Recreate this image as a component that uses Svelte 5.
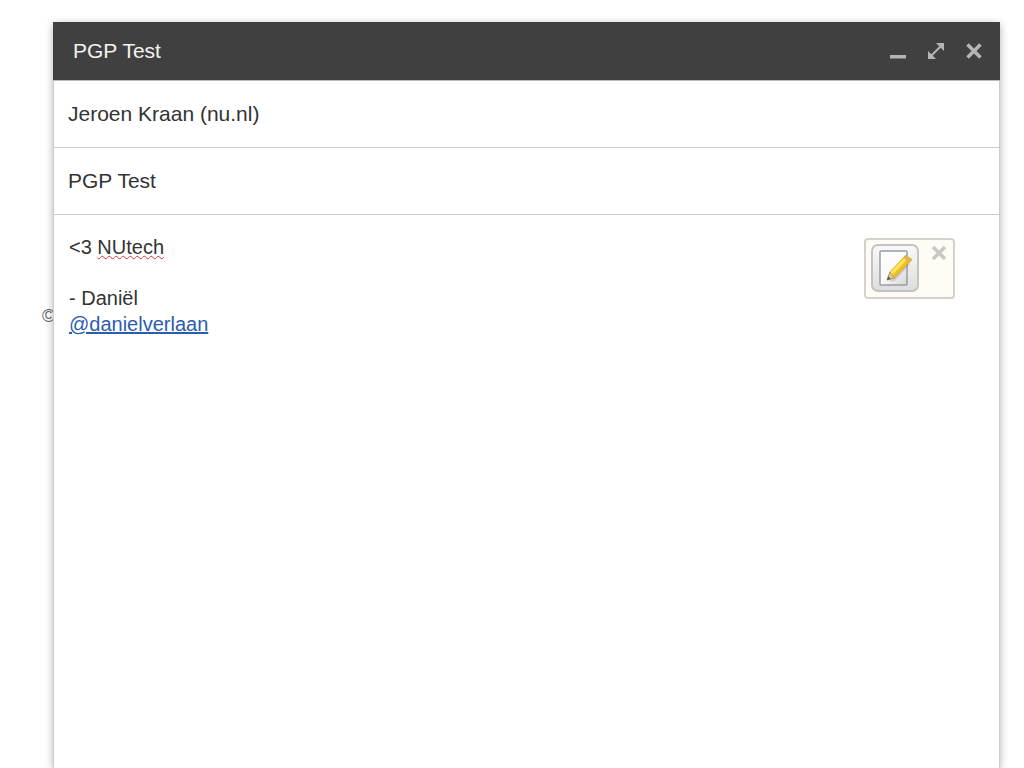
<script lang="ts">
	let title = "PGP Test";
	let recipient = $state("Jeroen Kraan (nu.nl)");
	let subject = $state("PGP Test");
	let toolOpen = $state(true);
</script>

<div class="page">
	<footer>©</footer>

	<section class="compose" aria-label="Compose message">
		<header>
			<h1>{title}</h1>
			<div class="controls">
				<button type="button" aria-label="Minimize">
					<svg viewBox="0 0 18 18"><path d="M1 13h16v3.500H1z" /></svg>
				</button>
				<button type="button" aria-label="Full screen">
					<svg viewBox="0 0 18 18">
						<path d="M9 1h8v8zM1 9v8h8z" />
						<path class="shaft" d="M4 14L14 4" />
					</svg>
				</button>
				<button type="button" aria-label="Close">
					<svg viewBox="0 0 18 18">
						<path class="cross" d="M2.500 2.500l13 13M15.500 2.500l-13 13" />
					</svg>
				</button>
			</div>
		</header>

		<input type="text" aria-label="To" spellcheck="false" bind:value={recipient} />
		<input type="text" aria-label="Subject" spellcheck="false" bind:value={subject} />

		<div class="body">
			<div
				class="message"
				role="textbox"
				tabindex="0"
				aria-multiline="true"
				aria-label="Message body"
				contenteditable="true"
				spellcheck="false"
			>
				<p>&lt;3 <span class="misspelled">NUtech</span></p>
				<p>- Daniël<br /><a href="#danielverlaan">@danielverlaan</a></p>
			</div>

			{#if toolOpen}
				<div class="tool">
					<button type="button" class="edit" aria-label="Open secure editor">
						<svg viewBox="0 0 44 44">
							<defs>
								<linearGradient id="paper" x1="0" y1="0" x2="1" y2="1">
									<stop offset="0" stop-color="#fff" />
									<stop offset="0.5" stop-color="#fafafa" />
									<stop offset="1" stop-color="#d4d5d8" />
								</linearGradient>
							</defs>
							<rect x="7" y="5" width="27" height="34" rx="1" fill="url(#paper)" stroke="#989ca4" stroke-width="1.500" />
							<path d="M16 36l6-1 15-17-3-3z" fill="#777" opacity="0.25" />
							<path d="M14 34l3-8L32.500 9.500 39 13.500 21.500 32z" fill="#efbf26" stroke="#cda02a" stroke-width="0.800" />
							<path d="M17.500 26L32.500 10.500l2.500 1.500-15.500 17z" fill="#ffe45a" />
							<path d="M14 34l3-8 4.500 6z" fill="#e2c4a0" stroke="#a98b62" stroke-width="0.700" />
							<path d="M14 34l1.400-3.800 2.300 2.800z" fill="#555" />
							<path d="M30.500 11.700L32.500 9.500l6.500 4-2.200 2.500z" fill="#e3b04a" />
						</svg>
					</button>
					<button type="button" class="dismiss" aria-label="Hide" onclick={() => (toolOpen = false)}>
						<svg viewBox="0 0 18 18">
							<path class="cross" d="M3 3l12 12M15 3L3 15" />
						</svg>
					</button>
				</div>
			{/if}
		</div>
	</section>
</div>

<style>
	:global(body) {
		margin: 0;
		background: #fff;
	}

	.page {
		display: grid;
		grid-template-columns: 53px minmax(0, 1fr) 24px;
		box-sizing: border-box;
		height: 100vh;
		padding-top: 22px;
		overflow: hidden;
		font-family: "Liberation Sans", Arial, sans-serif;
		color: #333;
	}

	footer {
		padding: 284px 0 0 42px;
		overflow: hidden;
		font-size: 18px;
		line-height: 20px;
		color: #666;
	}

	.compose {
		display: flex;
		flex-direction: column;
		border: 1px solid #ccc;
		border-width: 0 1px;
		background: #fff;
		box-shadow: 0 2px 8px rgb(0 0 0 / 30%);
	}

	header {
		display: flex;
		align-items: center;
		justify-content: space-between;
		box-sizing: border-box;
		height: 59px;
		margin: 0 -1px;
		padding: 0 17px 0 20px;
		border-bottom: 1px solid #bbb;
		background: #404040;
		color: #f2f2f2;
	}

	h1 {
		margin: 0;
		font-size: 21px;
		font-weight: normal;
		line-height: 26px;
	}

	.controls {
		display: flex;
		gap: 20px;
	}

	button {
		display: block;
		padding: 0;
		border: 0;
		background: none;
		color: #b5b5b5;
		cursor: pointer;
	}

	svg {
		display: block;
		width: 18px;
		height: 18px;
		fill: currentColor;
	}

	.cross,
	.shaft {
		fill: none;
		stroke: currentColor;
		stroke-width: 3.5;
	}

	.shaft {
		stroke-width: 2;
	}

	input {
		box-sizing: border-box;
		width: 100%;
		height: 67px;
		padding: 0 14px;
		border: 0;
		border-bottom: 1px solid #ccc;
		outline: none;
		background: transparent;
		font: 21px/26px "Liberation Sans", Arial, sans-serif;
		color: #333;
	}

	.body {
		display: flex;
		flex: 1;
		align-items: flex-start;
		padding: 19px 44px 0 15px;
	}

	.message {
		flex: 1;
		outline: none;
		font-size: 20px;
		line-height: 26px;
	}

	p {
		margin: 0 0 25px;
	}

	.misspelled {
		text-decoration: underline wavy #d43a3a 1px;
	}

	a {
		color: #2a5db0;
	}

	.tool {
		display: flex;
		align-items: flex-start;
		justify-content: space-between;
		box-sizing: border-box;
		width: 91px;
		height: 61px;
		margin-top: 4px;
		padding: 4px 5px;
		border: 2px solid #d5d1cd;
		border-radius: 4px;
		background: #fffbf5;
	}

	.edit {
		border: 2px solid #c3c3c3;
		border-radius: 7px;
		background: linear-gradient(#f8f8f8, #dedede);
	}

	.edit svg {
		width: 44px;
		height: 44px;
	}

	.dismiss {
		color: #c9c7c4;
	}
</style>
